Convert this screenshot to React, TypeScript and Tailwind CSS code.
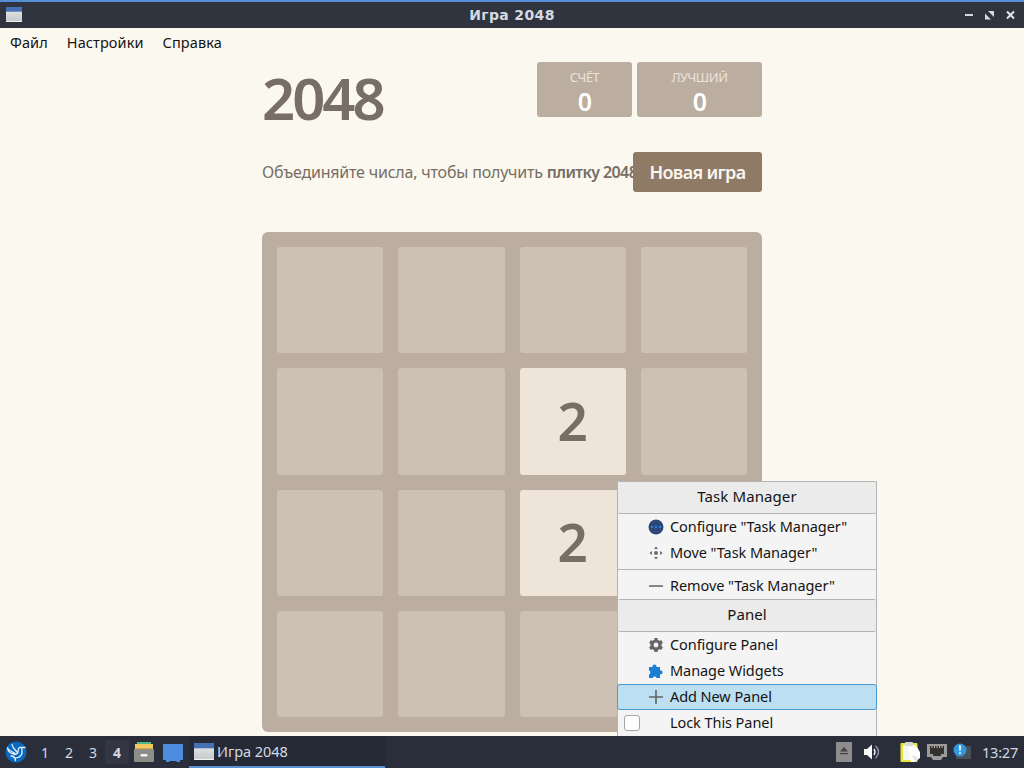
import type { ReactNode } from "react";
import clsx from "clsx";

const BOARD = [0, 0, 0, 0, 0, 0, 2, 0, 0, 0, 2, 0, 0, 0, 0, 0];

function WindowIcon({ className }: { className?: string }) {
  return (
    <svg viewBox="0 0 20 16" preserveAspectRatio="none" className={className}>
      <defs>
        <linearGradient id="win" x1="0" y1="0" x2="0" y2="1">
          <stop offset="0" stopColor="#e9eaea" />
          <stop offset="1" stopColor="#c3c8ca" />
        </linearGradient>
      </defs>
      <rect width="20" height="16" fill="url(#win)" />
      <rect width="20" height="5" fill="#466fb5" />
      <rect y="15" width="20" height="1" fill="#f1f3f3" />
    </svg>
  );
}

function TitleBar() {
  return (
    <div className="grid h-7 shrink-0 grid-cols-[1fr_auto_1fr] items-center border-t-2 border-[#5590d6] bg-[#2f343f] px-1.5">
      <WindowIcon className="h-[15px] w-4 -translate-y-px" />
      <span className="font-['DejaVu_Sans',sans-serif] text-[14px] font-bold leading-none tracking-[0.35px] text-[#d3dae3]">
        Игра 2048
      </span>
      <div className="flex items-center justify-end gap-3 pr-[3px]">
        <svg viewBox="0 0 9 10" className="h-2.5 w-[9px]" fill="#d3dae3">
          <rect x="1" y="4" width="8" height="2" />
        </svg>
        <svg viewBox="0 0 9 10" className="h-2.5 w-[9px]" fill="#d3dae3">
          <path d="M3 1h6v6zM0 3.500v6h6z" />
        </svg>
        <svg viewBox="0 0 9 10" className="h-2.5 w-[9px]" stroke="#e0e6ed" strokeWidth="2">
          <path d="M1 1.5l7 7M8 1.5l-7 7" />
        </svg>
      </div>
    </div>
  );
}

function ScoreBox({ label, className }: { label: string; className: string }) {
  return (
    <div className={clsx("flex h-[55px] flex-col items-center rounded-[3px] bg-[#bbada0] pt-[9px]", className)}>
      <span className="text-[13px] leading-[13px] tracking-[-0.5px] text-[#eee4da]">{label}</span>
      <span className="mt-1 pl-px text-[25px] font-semibold leading-[26px] text-white">0</span>
    </div>
  );
}

function Game() {
  return (
    <div className="mx-auto w-[500px] font-['Noto_Sans','Open_Sans',sans-serif] text-[#776e65]">
      <div className="flex h-[94px] items-start justify-between pt-1">
        <h1 className="pt-2 text-[58px] font-semibold leading-[56px] tracking-[-3px]">2048</h1>
        <div className="flex gap-[5px]">
          <ScoreBox label="СЧЁТ" className="w-[95px]" />
          <ScoreBox label="ЛУЧШИЙ" className="w-[125px]" />
        </div>
      </div>
      <div className="flex h-20 items-start">
        <p className="w-[371px] shrink-0 whitespace-nowrap text-[16px] leading-10 tracking-[-0.2px]">
          Объединяйте числа, чтобы получить <b className="font-semibold tracking-[-0.6px]">плитку 2048!</b>
        </p>
        <button className="z-10 h-10 w-[129px] shrink-0 rounded-[3px] bg-[#8f7a66] text-[18px] font-semibold tracking-[-0.7px] text-[#f9f6f2]">
          Новая игра
        </button>
      </div>
      <div className="grid h-[500px] grid-cols-4 grid-rows-4 gap-[15px] rounded-md bg-[#bbada0] p-[15px]">
        {BOARD.map((value, i) => (
          <div
            key={i}
            className={clsx(
              "flex min-h-0 items-center justify-center rounded-[3px] pb-0.5 text-[53px] font-semibold leading-none",
              value ? "bg-[#eee4da]" : "bg-[#cdc1b4]",
            )}
          >
            {value || null}
          </div>
        ))}
      </div>
    </div>
  );
}

function MenuHeader({ children }: { children: ReactNode }) {
  return (
    <div className="flex h-[33px] items-center justify-center rounded-[2px] border-y border-[#b4b4b5] bg-[#ebebeb] pb-0.5 text-[15px] tracking-[0.1px]">
      {children}
    </div>
  );
}

function MenuItem({ icon, checkbox, active, children }: { icon?: ReactNode; checkbox?: boolean; active?: boolean; children: ReactNode }) {
  return (
    <div
      className={clsx(
        "flex h-[26px] items-center whitespace-nowrap",
        active && "-mx-px rounded-[3px] border border-[#469bcf] bg-[#bcdff1]",
      )}
    >
      <span className="flex w-[30px] items-center pl-1.5">
        {checkbox && <span className="h-4 w-4 rounded-[3px] border border-[#a5a5a5] bg-white" />}
      </span>
      <span className="flex w-[22px] items-center">{icon}</span>
      <span className="pb-0.5 tracking-[-0.07px]">{children}</span>
    </div>
  );
}

const iconSize = "h-4 w-4";

function ContextMenu() {
  return (
    <div className="absolute left-[617px] top-[481px] z-20 h-[255px] w-[260px] border-x border-[#b4b4b5] bg-[#f4f4f4] font-['Noto_Sans','Open_Sans',sans-serif] text-[14.5px] leading-none text-[#141414]">
      <MenuHeader>Task Manager</MenuHeader>
      <MenuItem
        icon={
          <svg viewBox="0 0 16 16" className={iconSize}>
            <circle cx="8" cy="8" r="7.5" fill="#2c4778" />
            <g fill="#2684d8">
              <circle cx="4" cy="8" r="1.2" />
              <circle cx="8" cy="8" r="1.2" />
              <circle cx="12" cy="8" r="1.2" />
            </g>
          </svg>
        }
      >
        Configure "Task Manager"
      </MenuItem>
      <MenuItem
        icon={
          <svg viewBox="0 0 16 16" className={iconSize} fill="#6b6b6b">
            <circle cx="8" cy="8" r="2" />
            <path d="M8 1.5l2 2.5H6zM8 14.5L6 12h4zM1.5 8L4 6v4zM14.5 8L12 10V6z" />
          </svg>
        }
      >
        Move "Task Manager"
      </MenuItem>
      <div className="mb-[3px] mt-[3px] h-px bg-[#b4b4b5]" />
      <MenuItem
        icon={
          <svg viewBox="0 0 16 16" className={iconSize}>
            <path d="M1 8h14" stroke="#6b6b6b" strokeWidth="1.6" />
          </svg>
        }
      >
        Remove "Task Manager"
      </MenuItem>
      <MenuHeader>Panel</MenuHeader>
      <MenuItem
        icon={
          <svg viewBox="0 0 16 16" className={iconSize}>
            <circle cx="8" cy="8" r="4" fill="none" stroke="#666" strokeWidth="3.2" />
            <path
              d="M8 1v3M8 12v3M1.9 4.5l2.6 1.5M11.5 10l2.6 1.5M1.9 11.5L4.5 10M11.5 6l2.6-1.5"
              stroke="#666"
              strokeWidth="3.2"
            />
          </svg>
        }
      >
        Configure Panel
      </MenuItem>
      <MenuItem
        icon={
          <svg viewBox="0 0 16 16" className={iconSize} fill="#1a80d4">
            <path d="M1 4h3.6a2 2 0 1 1 3.8 0H12v3.4a2 2 0 1 1 0 3.8V15H8.6a2 2 0 0 0-3.8 0H1v-3.6a2 2 0 0 0 0-3.8z" />
          </svg>
        }
      >
        Manage Widgets
      </MenuItem>
      <MenuItem
        active
        icon={
          <svg viewBox="0 0 16 16" className={iconSize}>
            <path d="M1 8h14M8 1v14" stroke="#5d6468" strokeWidth="1.6" />
          </svg>
        }
      >
        Add New Panel
      </MenuItem>
      <MenuItem checkbox>Lock This Panel</MenuItem>
    </div>
  );
}

function LauncherIcon() {
  return (
    <svg viewBox="0 0 22 22" className="h-[22px] w-[22px]">
      <circle cx="11" cy="11" r="10.5" fill="#0b68c1" />
      <path
        d="M2.500 7c1.500 3 4 3 7.500 5.500M7 3.500c.5 3.500 2.500 5 5 7.500M2.500 7c.5 4 3 5.500 6.500 6M20 6.500h-3.500c-2.200-.5-3.500.8-3.300 3 0 2.500-1.200 4-4.200 4M17 7c-.8 1.500 1 3.500-.5 6.500-1.300 2.500-3.500 3.500-6.500 3.500M6 15c2 0 4 1 4.500 4.500"
        fill="none"
        stroke="#e3f1fc"
        strokeWidth="1.3"
        strokeLinecap="round"
        strokeLinejoin="round"
      />
    </svg>
  );
}

function Taskbar() {
  return (
    <div className="flex h-8 shrink-0 items-center bg-[#2a2e3a] pl-[5px] font-['Noto_Sans','Open_Sans',sans-serif] text-[14px] leading-none text-[#d3dae3]">
      <LauncherIcon />
      <div className="ml-1.5 flex h-8">
        {[1, 2, 3, 4].map((n) => (
          <span
            key={n}
            className={clsx("flex w-6 items-center justify-center pt-px", n === 4 && "my-1 rounded-xs bg-[#343743] font-bold")}
          >
            {n}
          </span>
        ))}
      </div>
      <svg viewBox="0 0 20 20" className="ml-[5px] h-5 w-5">
        <path d="M3 0h14v3H3z" fill="#4fb88b" />
        <path d="M1 2h18v6H1z" fill="#f3c95d" />
        <path d="M1 6h18v1H1z" fill="#d9ad43" />
        <rect y="7" width="20" height="13" rx="1" fill="#8e8e89" />
        <rect x="6.500" y="12" width="7" height="2.500" rx="1" fill="#f4f4f4" />
      </svg>
      <svg viewBox="0 0 20 18" className="ml-[9px] mt-0.5 h-[18px] w-5">
        <path d="M0 0h20v16h-3v2h-3l-1-1H7l-1 1H3v-2H0z" fill="#4e8cdd" />
      </svg>
      <div className="ml-1.5 flex h-8 w-[196px] items-center border-b-2 border-[#5c8fce] bg-[#262a36] pl-[5px]">
        <WindowIcon className="h-[17px] w-5" />
        <span className="ml-[3px] text-[14.5px] tracking-[-0.05px]">Игра 2048</span>
      </div>
      <div className="ml-auto flex items-center">
        <svg viewBox="0 0 16 20" className="h-5 w-4">
          <rect width="16" height="20" fill="#8d8d8d" />
          <path d="M4 9.500L8 5l4 4.500zM4 11h8v1.200H4z" fill="#434343" />
        </svg>
        <svg viewBox="0 0 17 16" className="ml-3 h-4 w-[17px]">
          <path d="M0 5h3l5-4.500v15L3 11H0z" fill="#fafafa" />
          <path d="M10 5q2 3 0 6" stroke="#e6e8ec" strokeWidth="1.500" fill="none" />
          <path d="M11.500 1.800q6 6.200 0 12.400" stroke="#8b929c" strokeWidth="1.500" fill="none" />
        </svg>
        <svg viewBox="0 0 20 22" className="ml-[19px] h-[22px] w-5">
          <rect x=".5" y="2" width="17" height="19" rx="1" fill="#e5e33c" />
          <path d="M3 4h13v15H3z" fill="#f6f6ef" />
          <rect x="5" y="1" width="8" height="4" rx="1" fill="#d9d9d3" />
          <path d="M8 6h9l3 5v6l-5 4h-4z" fill="#fff" />
          <path d="M12 14l3 7 4-4" fill="#e6e6e6" />
        </svg>
        <svg viewBox="0 0 20 18" className="ml-[7px] h-[18px] w-5">
          <path d="M0 1h20v13h-4l-2 3H6l-2-3H0z" fill="#9b9b9b" />
          <path d="M3 3h14v8h-3v2H6v-2H3z" fill="#343131" />
          <path d="M5 3v2M7.500 3v2M10 3v2M12.500 3v2M15 3v2" stroke="#c1b7a8" />
        </svg>
        <svg viewBox="0 0 20 18" className="ml-1.5 h-[18px] w-5">
          <path d="M9 3h9v13H3v-4z" fill="#4a5058" />
          <circle cx="7" cy="7" r="6.500" fill="#3498e0" />
          <path d="M6 2.500h2L7.600 8H6.400zM6.200 9.300h1.600v1.700H6.200z" fill="#fff" />
        </svg>
        <span className="ml-[9px] mr-[5px] w-[37px] whitespace-nowrap text-[14.5px] tracking-[-0.2px]">13:27</span>
      </div>
    </div>
  );
}

export default function App() {
  return (
    <div className="relative flex h-[768px] w-[1024px] flex-col overflow-hidden bg-[#fbf8ef]">
      <TitleBar />
      <div className="flex min-h-0 flex-1 flex-col">
        <nav className="flex h-[30px] shrink-0 items-center gap-[19px] pb-0.5 pl-2.5 font-['Noto_Sans','Open_Sans',sans-serif] text-[14.5px] leading-none tracking-[0.1px] text-[#141414]">
          <span>Файл</span>
          <span>Настройки</span>
          <span>Справка</span>
        </nav>
        <Game />
      </div>
      <Taskbar />
      <ContextMenu />
    </div>
  );
}
